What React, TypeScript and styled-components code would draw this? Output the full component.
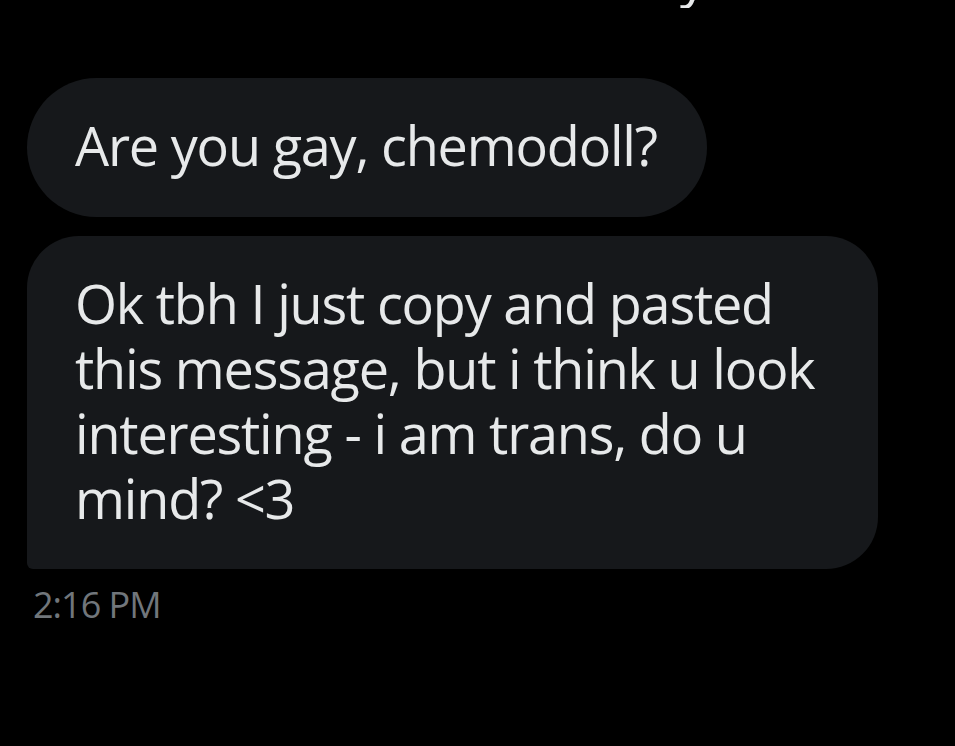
import React from 'react';
import styled, { createGlobalStyle } from 'styled-components';

const GlobalStyle = createGlobalStyle`
  html, body {
    margin: 0;
    padding: 0;
    background: #000;
  }
  body {
    font-family: 'Open Sans', 'Noto Sans', sans-serif;
    -webkit-font-smoothing: antialiased;
  }
`;

const messages = [
  { id: 1, lines: ['Are you gay, chemodoll?'], tail: false },
  {
    id: 2,
    lines: ['Ok tbh I just copy and pasted', 'this message, but i think u look', 'interesting - i am trans, do u', 'mind? <3'],
    tail: true,
  },
];

export default function App() {
  return (
    <>
      <GlobalStyle />
      <Screen>
        <CutOff>
          <CutGlyph>y</CutGlyph>
        </CutOff>
        <Thread>
          {messages.map(msg => (
            <Bubble key={msg.id} $tail={msg.tail} $wide={msg.lines.length > 1}>
              {msg.lines.map((line, i) => (
                <Line key={i}>{line}</Line>
              ))}
            </Bubble>
          ))}
          <Timestamp>2:16 PM</Timestamp>
        </Thread>
      </Screen>
    </>
  );
}

const Screen = styled.div`
  width: 955px;
  height: 746px;
  background: #000;
  overflow: hidden;
`;

const CutOff = styled.div`
  height: 8px;
  overflow: hidden;
  padding-left: 680px;
`;

const CutGlyph = styled.div`
  font-size: 54px;
  line-height: 60px;
  margin-top: -55px;
  color: #e7e9ea;
`;

const Thread = styled.div`
  display: flex;
  flex-direction: column;
  align-items: flex-start;
  gap: 19px;
  padding: 70px 0 0 27px;
`;

const Bubble = styled.div<{ $tail: boolean; $wide: boolean }>`
  box-sizing: border-box;
  width: ${p => (p.$wide ? '851px' : 'auto')};
  padding: ${p => (p.$wide ? '35px 48px 38px 48px' : '35px 50px 39px 48px')};
  background: #16181b;
  color: #e7e9ea;
  font-size: 54px;
  line-height: 65px;
  letter-spacing: -1.2px;
  border-radius: ${p => (p.$tail ? '52px 52px 52px 6px' : '70px')};
`;

const Line = styled.div`
  white-space: nowrap;
`;

const Timestamp = styled.div`
  margin-top: -5px;
  padding-left: 6px;
  font-size: 36px;
  line-height: 44px;
  color: #71767b;
  letter-spacing: -1px;
`;
